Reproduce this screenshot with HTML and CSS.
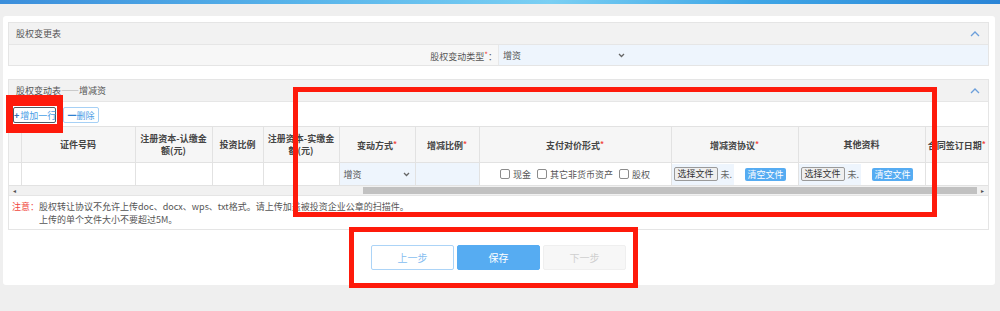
FILE: index.html
```html
<!DOCTYPE html>
<html lang="zh-CN">
  <head>
    <meta charset="UTF-8" />
    <title>股权变更表</title>
    <link rel="stylesheet" href="styles.css">
  </head>
  <body>
    <div class="topbar"></div>

    <div class="card">
      <section class="panel">
        <div class="panel-head">
          <span>股权变更表</span>
          <svg class="fold" width="10" height="6" viewBox="0 0 10 6"><polyline points="1,5 5,1 9,5" /></svg>
        </div>
        <div class="form-row">
          <div class="form-label">股权变动类型<i class="req">*</i>：</div>
          <div class="form-value">
            <div class="select select-wide">
              <span>增资</span>
              <svg width="7" height="5" viewBox="0 0 7 5"><polyline points="1,1 3.5,3.5 6,1" /></svg>
            </div>
          </div>
        </div>
      </section>

      <section class="panel panel-second">
        <div class="panel-head">
          <span>股权变动表——增减资</span>
          <svg class="fold" width="10" height="6" viewBox="0 0 10 6"><polyline points="1,5 5,1 9,5" /></svg>
        </div>
        <div class="toolbar">
          <button class="btn-add"><b>+</b>增加一行</button>
          <button class="btn-del"><b>一</b>删除</button>
        </div>

        <div class="grid-wrap">
          <table class="grid">
            <colgroup>
              <col style="width: 12px" />
              <col style="width: 114px" />
              <col style="width: 77px" />
              <col style="width: 51px" />
              <col style="width: 76px" />
              <col style="width: 76px" />
              <col style="width: 64px" />
              <col style="width: 192px" />
              <col style="width: 127px" />
              <col style="width: 127px" />
              <col style="width: 63px" />
            </colgroup>
            <thead>
              <tr>
                <th></th>
                <th>证件号码</th>
                <th>注册资本-认缴金额(元)</th>
                <th>投资比例</th>
                <th>注册资本-实缴金额(元)</th>
                <th>变动方式<i class="req">*</i></th>
                <th>增减比例<i class="req">*</i></th>
                <th>支付对价形式<i class="req">*</i></th>
                <th>增减资协议<i class="req">*</i></th>
                <th>其他资料</th>
                <th class="th-tight">合同签订日期<i class="req">*</i></th>
              </tr>
            </thead>
            <tbody>
              <tr>
                <td></td>
                <td></td>
                <td></td>
                <td></td>
                <td></td>
                <td class="cell-input">
                  <div class="select">
                    <span>增资</span>
                    <svg width="7" height="5" viewBox="0 0 7 5"><polyline points="1,1 3.5,3.5 6,1" /></svg>
                  </div>
                </td>
                <td class="cell-input"></td>
                <td>
                  <div class="checks">
                    <label><input type="checkbox" />现金</label>
                    <label><input type="checkbox" />其它非货币资产</label>
                    <label><input type="checkbox" />股权</label>
                  </div>
                </td>
                <td>
                  <div class="upload">
                    <div class="file"><span class="file-btn">选择文件</span><span class="file-name">未.</span></div>
                    <div class="clear"><span class="btn-clear">清空文件</span></div>
                  </div>
                </td>
                <td>
                  <div class="upload">
                    <div class="file"><span class="file-btn">选择文件</span><span class="file-name">未.</span></div>
                    <div class="clear"><span class="btn-clear">清空文件</span></div>
                  </div>
                </td>
                <td></td>
              </tr>
            </tbody>
          </table>
        </div>

        <div class="hscroll">
          <span class="sb-arrow">&#9666;</span>
          <span class="sb-gap"></span>
          <span class="sb-thumb"></span>
          <span class="sb-arrow">&#9656;</span>
        </div>

        <div class="note">
          <p><span class="note-key">注意：</span>股权转让协议不允许上传doc、docx、wps、txt格式。请上传加盖被投资企业公章的扫描件。</p>
          <p class="note-indent">上传的单个文件大小不要超过5M。</p>
        </div>
      </section>

      <div class="actions">
        <button class="btn-prev">上一步</button>
        <button class="btn-save">保存</button>
        <button class="btn-next">下一步</button>
      </div>
    </div>

    <div class="mark mark-add"></div>
    <div class="mark mark-grid"></div>
    <div class="mark mark-actions"></div>
  </body>
</html>
```

FILE: styles.css
```css
* {
  margin: 0;
  padding: 0;
  box-sizing: border-box;
}
body {
  position: relative;
  height: 311px;
  overflow: hidden;
  background-color: #efefef;
  font-family: "Noto Sans CJK SC", "Microsoft YaHei", sans-serif;
  font-size: 9px;
  color: #555;
}
button {
  font-family: inherit;
  font-size: 9px;
  cursor: pointer;
}
.topbar {
  height: 4px;
  background: linear-gradient(90deg, #3b8edb 0%, #58b4ea 30%, #7acff3 55%, #3fa6e6 75%, #2a84d6 100%);
}
.card {
  width: 992px;
  margin: 12px 0 0 3px;
  padding: 6px 6px 15px 5px;
  background-color: #fff;
  border-radius: 3px;
}
.panel {
  border: 1px solid #e5e5e5;
}
.panel-second {
  margin-top: 13px;
}
.panel-head {
  height: 22px;
  display: flex;
  align-items: center;
  justify-content: space-between;
  padding: 0 8px 0 7px;
  background-color: #f2f2f2;
  border-bottom: 1px solid #e6e6e6;
  color: #555;
}
.fold {
  fill: none;
  stroke: #6c9fdb;
  stroke-width: 1.3;
}
.req {
  color: #f0483e;
  font-style: normal;
  vertical-align: 2px;
  font-size: 8px;
}
.form-row {
  display: flex;
  height: 20px;
}
.form-label {
  width: 489px;
  padding-right: 1px;
  background-color: #f7f7f7;
  text-align: right;
  line-height: 20px;
  color: #555;
}
.form-value {
  flex: 1;
  background-color: #eef5fd;
  border-left: 1px solid #e8e8e8;
}
.select {
  height: 100%;
  display: flex;
  align-items: center;
  justify-content: space-between;
  padding: 0 5px 0 4px;
  color: #555;
}
.select svg {
  fill: none;
  stroke: #666;
  stroke-width: 1.3;
}
.select-wide {
  width: 131px;
}
.toolbar {
  height: 24px;
  padding: 5px 0 0 4px;
  display: flex;
  align-items: flex-start;
}
.btn-add {
  width: 43px;
  height: 16px;
  padding: 0;
  background-color: #fff;
  border: 1px solid #4d5a66;
  border-radius: 2px;
  color: #4a9de6;
  white-space: nowrap;
}
.btn-add b {
  margin-right: 1px;
  color: #2f6fb5;
}
.btn-del {
  width: 36px;
  height: 16px;
  padding: 0;
  margin-left: 7px;
  background-color: #fff;
  border: 1px solid #a6d0f5;
  border-radius: 2px;
  color: #4a9de6;
  white-space: nowrap;
}
.btn-del b {
  color: #2f7fd0;
}
.grid-wrap {
  overflow: hidden;
}
.grid {
  width: 979px;
  table-layout: fixed;
  border-collapse: collapse;
}
.grid th,
.grid td {
  border: 1px solid #e2e2e2;
  text-align: center;
}
.grid tr > :first-child {
  border-left: none;
}
.grid tr > :last-child {
  border-right: none;
}
.grid th {
  height: 36px;
  padding: 0 4px;
  background-color: #f6f6f6;
  font-weight: bold;
  color: #444;
  line-height: 12px;
}
.grid .th-tight {
  padding: 0;
  white-space: nowrap;
}
.grid td {
  height: 23px;
  padding: 0;
  background-color: #fff;
}
.grid .cell-input {
  background-color: #eef5fd;
}
.checks {
  display: flex;
  justify-content: center;
  gap: 6px;
  color: #555;
}
.checks label {
  display: flex;
  align-items: center;
}
.checks input {
  appearance: none;
  width: 10px;
  height: 10px;
  margin-right: 3px;
  border: 1px solid #8c8c8c;
  border-radius: 2px;
  background-color: #fff;
}
.upload {
  display: flex;
  height: 21px;
  align-items: center;
}
.file {
  width: 62px;
  height: 100%;
  display: flex;
  align-items: center;
  padding-left: 2px;
  background-color: #eef5fd;
  color: #666;
}
.file-btn {
  height: 14px;
  padding: 0 3px;
  line-height: 12px;
  background-color: #efefef;
  border: 1px solid #9a9a9a;
  border-radius: 2px;
  color: #333;
}
.file-name {
  margin-left: 3px;
}
.clear {
  flex: 1;
  display: flex;
  justify-content: center;
}
.btn-clear {
  height: 13px;
  padding: 0 2px;
  line-height: 13px;
  background-color: #56acf2;
  border-radius: 2px;
  color: #fff;
}
.hscroll {
  height: 10px;
  display: flex;
  align-items: center;
  background-color: #f1f1f1;
  border-bottom: 1px solid #e5e5e5;
}
.sb-arrow {
  width: 11px;
  text-align: center;
  font-size: 6px;
  line-height: 10px;
  color: #505050;
}
.sb-gap {
  width: 343px;
}
.sb-thumb {
  width: 614px;
  height: 7px;
  background-color: #c1c1c1;
}
.note {
  height: 33px;
  padding: 4px 0 0 3px;
  line-height: 13px;
  color: #555;
}
.note-key {
  color: #f0483e;
}
.note-indent {
  padding-left: 27px;
}
.actions {
  display: flex;
  justify-content: center;
  gap: 3px;
  margin-top: 15px;
}
.actions button {
  width: 83px;
  height: 25px;
  border-radius: 2px;
  font-size: 10px;
}
.btn-prev {
  background-color: #fff;
  border: 1px solid #acd4f7;
  color: #86bdf0;
}
.btn-save {
  background-color: #56acf2;
  border: 1px solid #56acf2;
  color: #fff;
}
.btn-next {
  background-color: #f7f7f7;
  border: 1px solid #efefef;
  color: #cfcfcf;
}
.mark {
  position: absolute;
  border: 5px solid #fe1a0b;
}
.mark-add {
  left: 6px;
  top: 95px;
  width: 57px;
  height: 38px;
  border-width: 11px 6px 9px 7px;
}
.mark-grid {
  left: 293px;
  top: 87px;
  width: 644px;
  height: 130px;
}
.mark-actions {
  left: 349px;
  top: 227px;
  width: 289px;
  height: 61px;
}
```
